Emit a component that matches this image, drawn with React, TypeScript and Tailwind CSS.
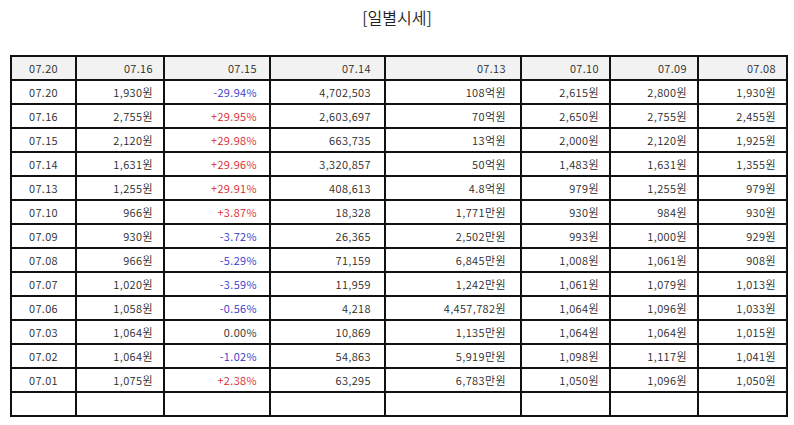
import React from "react";

const header = ["07.20", "07.16", "07.15", "07.14", "07.13", "07.10", "07.09", "07.08"];

const raw: string[][] = [
  ["07.20", "1,930원", "-29.94%", "4,702,503", "108억원", "2,615원", "2,800원", "1,930원"],
  ["07.16", "2,755원", "+29.95%", "2,603,697", "70억원", "2,650원", "2,755원", "2,455원"],
  ["07.15", "2,120원", "+29.98%", "663,735", "13억원", "2,000원", "2,120원", "1,925원"],
  ["07.14", "1,631원", "+29.96%", "3,320,857", "50억원", "1,483원", "1,631원", "1,355원"],
  ["07.13", "1,255원", "+29.91%", "408,613", "4.8억원", "979원", "1,255원", "979원"],
  ["07.10", "966원", "+3.87%", "18,328", "1,771만원", "930원", "984원", "930원"],
  ["07.09", "930원", "-3.72%", "26,365", "2,502만원", "993원", "1,000원", "929원"],
  ["07.08", "966원", "-5.29%", "71,159", "6,845만원", "1,008원", "1,061원", "908원"],
  ["07.07", "1,020원", "-3.59%", "11,959", "1,242만원", "1,061원", "1,079원", "1,013원"],
  ["07.06", "1,058원", "-0.56%", "4,218", "4,457,782원", "1,064원", "1,096원", "1,033원"],
  ["07.03", "1,064원", "0.00%", "10,869", "1,135만원", "1,064원", "1,064원", "1,015원"],
  ["07.02", "1,064원", "-1.02%", "54,863", "5,919만원", "1,098원", "1,117원", "1,041원"],
  ["07.01", "1,075원", "+2.38%", "63,295", "6,783만원", "1,050원", "1,096원", "1,050원"],
  ["", "", "", "", "", "", "", ""],
];

const widths = ["w-[65px]", "w-[88px]", "w-[106px]", "w-[115px]", "w-[136px]", "w-[89px]", "w-[88px]", "w-[89px]"];
const pads = [
  "text-center",
  "text-right pr-[10px]",
  "text-right pr-[12px]",
  "text-right pr-[13px]",
  "text-right pr-[14px]",
  "text-right pr-[10px]",
  "text-right pr-[10px]",
  "text-right pr-[10px]",
];

function colorOf(i: number, t: string) {
  if (i !== 2) return "text-[#2a2a2a]";
  if (t.startsWith("-")) return "text-[#3434cc]";
  if (t.startsWith("+")) return "text-[#e0242c]";
  return "text-[#2a2a2a]";
}

export default function App() {
  return (
    <div
      className="w-[794px] h-[425px] bg-white overflow-hidden font-[350]"
      style={{ fontFamily: '"Noto Sans CJK KR", "Noto Sans", sans-serif' }}
    >
      <div className="h-[34px] flex items-center justify-center text-[16px] text-[#222222]">
        [일별시세]
      </div>
      <table className="ml-[10px] mt-[21px] border-collapse table-fixed w-[775px] text-[11px] tracking-[0.4px]">
        <colgroup>
          {widths.map((w, i) => (
            <col key={i} className={w} />
          ))}
        </colgroup>
        <thead>
          <tr className="h-[24px] bg-[#f2f2f2]">
            {header.map((h, i) => (
              <th
                key={i}
                className={`border-2 border-[#111111] font-[350] p-0 leading-none text-[#2a2a2a] ${pads[i]}`}
              >
                {h}
              </th>
            ))}
          </tr>
        </thead>
        <tbody>
          {raw.map((r, ri) => (
            <tr key={ri} className="h-[24px]">
              {r.map((t, i) => (
                <td
                  key={i}
                  className={`border-2 border-[#111111] p-0 leading-none ${pads[i]} ${colorOf(i, t)}`}
                >
                  {t}
                </td>
              ))}
            </tr>
          ))}
        </tbody>
      </table>
    </div>
  );
}
